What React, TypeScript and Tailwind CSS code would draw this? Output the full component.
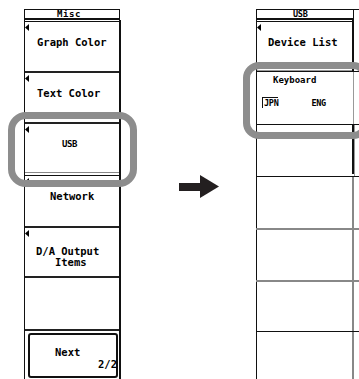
import React from 'react';

const mono = "font-['DejaVu_Sans_Mono','Liberation_Mono',monospace] font-bold";

function Tri() {
  return (
    <svg className="absolute left-0 top-[2px]" width="4" height="7" viewBox="0 0 4 7">
      <path d="M0 3.5L4 0V7Z" fill="#000" />
    </svg>
  );
}

function Label({ children, pl }: { children: React.ReactNode; pl: string }) {
  return <div className={`${pl} pt-[14px] text-[10.5px] leading-[12px] whitespace-pre`}>{children}</div>;
}

export default function App() {
  return (
    <div className={`relative w-[359px] h-[379px] overflow-hidden bg-white text-black flex items-start ${mono}`}>
      {/* Left menu: Misc */}
      <div className="ml-[24px] mt-[9px] w-[97px] flex flex-col">
        <div className="w-[96px] h-[11px] border-t border-l border-r border-b-2 border-[#111] pl-[32px] text-[9px] leading-[8px] tracking-[0.6px]">
          Misc
        </div>
        <div className="h-[359px] border-l border-r-2 border-[#111] pt-[1px] flex flex-col">
          <div className="relative h-[50px] border-t border-[#111]">
            <Tri />
            <Label pl="pl-[12px]">Graph Color</Label>
          </div>
          <div className="relative h-[51px] border-t-2 border-[#222]">
            <Tri />
            <Label pl="pl-[12px]">Text Color</Label>
          </div>
          <div className="relative h-[51px] border-t-2 border-b border-t-[#222] border-b-[#888] mb-[2px]">
            <Tri />
            <div className="pl-[37px] pt-[15px] text-[9px] leading-[10px] tracking-[-0.4px]">USB</div>
          </div>
          <div className="relative h-[51px] border-t border-[#111]">
            <Tri />
            <Label pl="pl-[25px]">Network</Label>
          </div>
          <div className="relative h-[50px] border-t-2 border-[#222]">
            <Tri />
            <div className="pl-[11px] pt-[18px] text-[10.5px] leading-[11px] whitespace-pre">
              {'D/A Output\n   Items'}
            </div>
          </div>
          <div className="h-[53px] border-t-2 border-[#222]" />
          <div className="flex-1 border-t-2 border-[#222]">
            <div className="ml-[3px] mt-[2px] w-[90px] h-[45px] border-2 border-[#111] rounded-[3px] pt-[11px] text-[10.5px] leading-[12px]">
              <div className="pl-[25px]">Next</div>
              <div className="text-right -mr-[1px]">2/2</div>
            </div>
          </div>
        </div>
      </div>

      {/* Arrow */}
      <svg className="ml-[58px] mt-[175px] shrink-0" width="40" height="23" viewBox="0 0 40 23">
        <rect x="0" y="8" width="22" height="8" fill="#231f20" />
        <path d="M21 0L40 11.5L21 23Z" fill="#231f20" />
      </svg>

      {/* Right menu: USB */}
      <div className="ml-[37px] mt-[9px] w-[103px] flex flex-col">
        <div className="flex h-[11px]">
          <div className="w-[98px] border-t border-l border-r border-b-2 border-[#111] pl-[36px] text-[8.5px] leading-[8px] tracking-[-0.3px]">
            USB
          </div>
          <div className="flex-1 border-t border-[#111]" />
        </div>
        <div className="flex h-[51px]">
          <div className="w-[98px] border-l border-r-2 border-[#111] flex flex-col">
            <div className="relative mt-[1px] flex-1 border-t border-b border-t-[#111] border-b-[#999]">
              <Tri />
              <Label pl="pl-[11px]">Device List</Label>
            </div>
          </div>
        </div>
        <div className="flex h-[53px] border-t border-[#111]">
          <div className="w-[98px] border-l border-r border-l-[#111] border-r-[#999]">
            <div className="pl-[16px] pt-[3px] text-[9px] leading-[10px]">Keyboard</div>
            <div className="flex items-start mt-[12px] pl-[5px] text-[8.5px] leading-[10px] tracking-[-0.3px]">
              <span className="border-t border-l border-[#111] pl-[1px] h-[11px]">JPN</span>
              <span className="ml-[33px] pt-[1px]">ENG</span>
            </div>
          </div>
        </div>
        <div className="flex h-[52px] border-t border-[#111]">
          <div className="w-[98px] border-l border-[#111] flex">
            <div className="flex-1" />
            <div className="w-[2px] h-[49px] bg-[#111]" />
          </div>
          <div className="flex-1 border-l border-[#999]" />
        </div>
        <div className="flex h-[52px] border-t border-[#111]">
          <div className="w-[98px] border-l border-r-2 border-l-[#111] border-r-[#888]" />
        </div>
        <div className="flex h-[52px] border-t-2 border-[#888]">
          <div className="w-[98px] border-l border-r-2 border-l-[#111] border-r-[#888]" />
        </div>
        <div className="flex h-[51px] border-t-2 border-[#888]">
          <div className="w-[98px] border-l border-r-2 border-l-[#111] border-r-[#888]" />
        </div>
        <div className="flex h-[60px] border-t border-[#111]">
          <div className="w-[98px] border-l border-r-2 border-l-[#111] border-r-[#888]" />
        </div>
      </div>

      {/* Highlight frames */}
      <div className="pointer-events-none absolute left-[8px] top-[112px] w-[129px] h-[75px] rounded-[18px] border-[7px] border-[#8d8d8d]" />
      <div className="pointer-events-none absolute left-[243px] top-[62px] w-[126px] h-[77px] rounded-[16px] border-[7px] border-[#8d8d8d]" />
    </div>
  );
}
